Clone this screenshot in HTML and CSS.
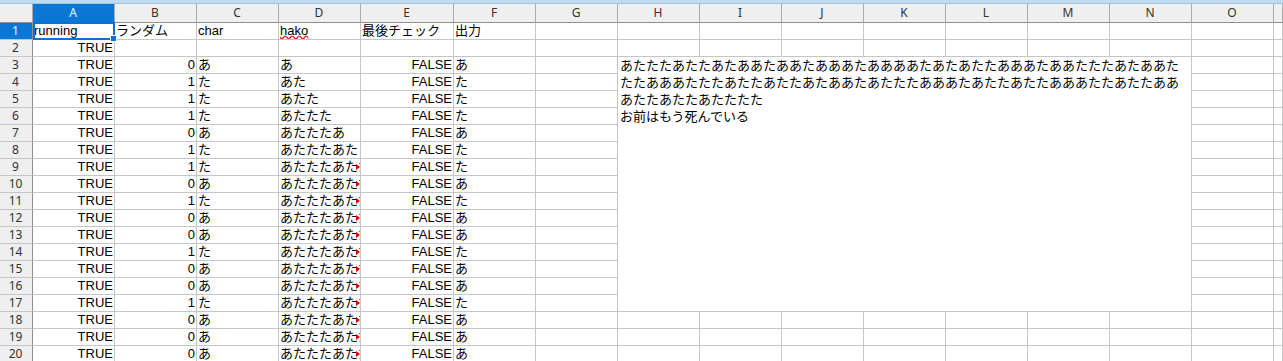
FILE: index.html
```html
<!DOCTYPE html>
<html lang="ja">
<head>
    <meta charset="UTF-8">
    <title>あたた - Calc</title>
    <link rel="stylesheet" href="styles.css">
</head>
<body>
    <div class="topbar"></div>
    <div class="sheet">
        <!-- Spaltenköpfe -->
        <div class="hd corner"></div>
        <div class="hd sel">A</div><div class="hd">B</div><div class="hd">C</div><div class="hd">D</div><div class="hd">E</div><div class="hd">F</div><div class="hd">G</div><div class="hd">H</div><div class="hd">I</div><div class="hd">J</div><div class="hd">K</div><div class="hd">L</div><div class="hd">M</div><div class="hd">N</div><div class="hd">O</div><div class="hd"></div>

        <!-- Zeile 1 -->
        <div class="rh sel">1</div>
        <div class="cur">running</div><div>ランダム</div><div>char</div><div><span class="typo">hako</span></div><div>最後チェック</div><div>出力</div>
        <div></div><div></div><div></div><div></div><div></div><div></div><div></div><div></div><div></div><div></div>

        <!-- Zeile 2 -->
        <div class="rh">2</div>
        <div class="r">TRUE</div><div></div><div></div><div></div><div></div><div></div>
        <div></div><div></div><div></div><div></div><div></div><div></div><div></div><div></div><div></div><div></div>

        <!-- verbundene Zelle H3:N17 -->
        <div class="merged">
            <div>あたたたあたたあたああたああたあああたああああたあたあたたあああたああたたたあたああた</div>
            <div>たたあああたたたあたたあたたあたああたあたたたあああたあたたあたたあああたたあたたああ</div>
            <div>あたたあたたあたたたた</div>
            <div>お前はもう死んでいる</div>
        </div>

        <div class="rh">3</div><div class="r">TRUE</div><div class="r">0</div><div>あ</div><div>あ</div><div class="r">FALSE</div><div>あ</div><div></div><div></div><div></div>
        <div class="rh">4</div><div class="r">TRUE</div><div class="r">1</div><div>た</div><div>あた</div><div class="r">FALSE</div><div>た</div><div></div><div></div><div></div>
        <div class="rh">5</div><div class="r">TRUE</div><div class="r">1</div><div>た</div><div>あたた</div><div class="r">FALSE</div><div>た</div><div></div><div></div><div></div>
        <div class="rh">6</div><div class="r">TRUE</div><div class="r">1</div><div>た</div><div>あたたた</div><div class="r">FALSE</div><div>た</div><div></div><div></div><div></div>
        <div class="rh">7</div><div class="r">TRUE</div><div class="r">0</div><div>あ</div><div>あたたたあ</div><div class="r">FALSE</div><div>あ</div><div></div><div></div><div></div>
        <div class="rh">8</div><div class="r">TRUE</div><div class="r">1</div><div>た</div><div>あたたたあた</div><div class="r">FALSE</div><div>た</div><div></div><div></div><div></div>
        <div class="rh">9</div><div class="r">TRUE</div><div class="r">1</div><div>た</div><div class="ov">あたたたあたた</div><div class="r">FALSE</div><div>た</div><div></div><div></div><div></div>
        <div class="rh">10</div><div class="r">TRUE</div><div class="r">0</div><div>あ</div><div class="ov">あたたたあたたあ</div><div class="r">FALSE</div><div>あ</div><div></div><div></div><div></div>
        <div class="rh">11</div><div class="r">TRUE</div><div class="r">1</div><div>た</div><div class="ov">あたたたあたたあた</div><div class="r">FALSE</div><div>た</div><div></div><div></div><div></div>
        <div class="rh">12</div><div class="r">TRUE</div><div class="r">0</div><div>あ</div><div class="ov">あたたたあたたあたあ</div><div class="r">FALSE</div><div>あ</div><div></div><div></div><div></div>
        <div class="rh">13</div><div class="r">TRUE</div><div class="r">0</div><div>あ</div><div class="ov">あたたたあたたあたああ</div><div class="r">FALSE</div><div>あ</div><div></div><div></div><div></div>
        <div class="rh">14</div><div class="r">TRUE</div><div class="r">1</div><div>た</div><div class="ov">あたたたあたたあたああた</div><div class="r">FALSE</div><div>た</div><div></div><div></div><div></div>
        <div class="rh">15</div><div class="r">TRUE</div><div class="r">0</div><div>あ</div><div class="ov">あたたたあたたあたああたあ</div><div class="r">FALSE</div><div>あ</div><div></div><div></div><div></div>
        <div class="rh">16</div><div class="r">TRUE</div><div class="r">0</div><div>あ</div><div class="ov">あたたたあたたあたああたああ</div><div class="r">FALSE</div><div>あ</div><div></div><div></div><div></div>
        <div class="rh">17</div><div class="r">TRUE</div><div class="r">1</div><div>た</div><div class="ov">あたたたあたたあたああたああた</div><div class="r">FALSE</div><div>た</div><div></div><div></div><div></div>

        <div class="rh">18</div><div class="r">TRUE</div><div class="r">0</div><div>あ</div><div class="ov">あたたたあたたあたああたああたあ</div><div class="r">FALSE</div><div>あ</div>
        <div></div><div></div><div></div><div></div><div></div><div></div><div></div><div></div><div></div><div></div>
        <div class="rh">19</div><div class="r">TRUE</div><div class="r">0</div><div>あ</div><div class="ov">あたたたあたたあたああたああたああ</div><div class="r">FALSE</div><div>あ</div>
        <div></div><div></div><div></div><div></div><div></div><div></div><div></div><div></div><div></div><div></div>
        <div class="rh">20</div><div class="r">TRUE</div><div class="r">0</div><div>あ</div><div class="ov">あたたたあたたあたああたああたあああ</div><div class="r">FALSE</div><div>あ</div>
        <div></div><div></div><div></div><div></div><div></div><div></div><div></div><div></div><div></div><div></div>
    </div>
</body>
</html>
```

FILE: styles.css
```css
body {
    margin: 0;
    font-family: "Liberation Sans", "Noto Sans CJK JP", sans-serif;
    font-size: 13px;
    color: #000;
    background: #fff;
    overflow: hidden;
}

.topbar {
    height: 3px;
    background-color: #bddcf1;
    border-bottom: 1px solid #a3c5de;
}

/* Tabellenraster: Zeilenköpfe, A-D, E (breiter), F-O, Rest von P */
.sheet {
    display: grid;
    grid-template-columns: 33px repeat(4, 82px) 93px repeat(10, 82px) 1fr;
    grid-template-rows: 19px;
    grid-auto-rows: 17px;
}

.sheet > div {
    box-sizing: border-box;
    border-right: 1px solid #c6c6c6;
    border-bottom: 1px solid #c6c6c6;
    line-height: 16px;
    padding: 0 2px 0 1px;
    white-space: nowrap;
    overflow: hidden;
}

.sheet > .hd {
    background-color: #efefef;
    border-right-color: #ababab;
    border-bottom-color: #8f8f8f;
    text-align: center;
    font-family: "Noto Sans", sans-serif;
    font-size: 12px;
    line-height: 18px;
    color: #333;
}

.sheet > .rh {
    background-color: #efefef;
    border-right-color: #8f8f8f;
    border-bottom-color: #c6c6c6;
    text-align: center;
    font-family: "Noto Sans", sans-serif;
    font-size: 12px;
    color: #333;
}

.sheet > .sel {
    background-color: #0a77d5;
    color: #eef6fd;
}

.sheet > .r {
    text-align: right;
    padding-right: 1px;
}

/* Zellcursor auf A1 */
.sheet > .cur {
    position: relative;
    overflow: visible;
}

.cur::before {
    content: "";
    position: absolute;
    left: 0;
    top: -1px;
    right: -1px;
    bottom: -1px;
    border: 2px solid #0b6fd6;
}

.cur::after {
    content: "";
    position: absolute;
    right: -3px;
    bottom: -3px;
    width: 5px;
    height: 5px;
    background-color: #0b6fd6;
    border: 1px solid #fff;
}

.typo {
    text-decoration: underline wavy #e02020;
    text-decoration-skip-ink: none;
    text-underline-offset: 0;
}

/* Text läuft über die Zelle hinaus */
.sheet > .ov {
    position: relative;
    padding-right: 0;
    text-overflow: clip;
}

.ov::after {
    content: "";
    position: absolute;
    right: 0;
    top: 5px;
    border-left: 4px solid #d80000;
    border-top: 3px solid transparent;
    border-bottom: 3px solid transparent;
}

.sheet > .merged {
    grid-column: 9 / span 7;
    grid-row: 4 / span 15;
    white-space: nowrap;
    line-height: 17px;
    padding: 0 2px;
}
```
